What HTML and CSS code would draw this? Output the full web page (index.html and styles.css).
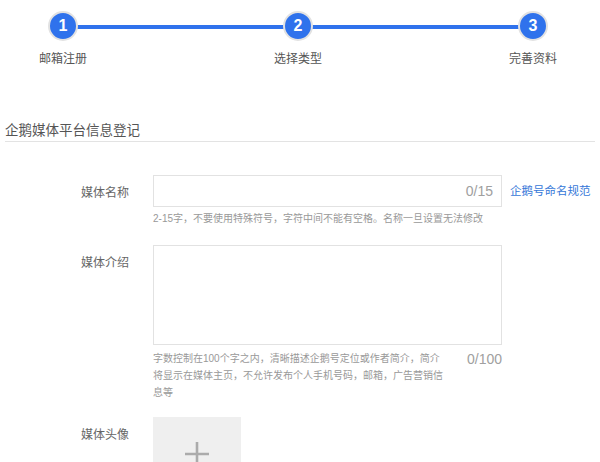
FILE: index.html
```html
<!DOCTYPE html>
<html lang="zh-CN">
<head>
<meta charset="utf-8">
<title>企鹅媒体平台信息登记</title>
<link rel="stylesheet" href="styles.css">
</head>
<body>
<div class="steps">
  <div class="step-dot"><span class="dot">1</span></div>
  <div class="connector"></div>
  <div class="step-dot"><span class="dot">2</span></div>
  <div class="connector"></div>
  <div class="step-dot"><span class="dot">3</span></div>
  <div class="step-label">邮箱注册</div>
  <div></div>
  <div class="step-label">选择类型</div>
  <div></div>
  <div class="step-label">完善资料</div>
</div>

<div class="section">
  <h2 class="section-title">企鹅媒体平台信息登记</h2>

  <div class="form">
    <div class="row row-name">
      <div class="label">媒体名称</div>
      <div class="field">
        <div class="field-line">
          <div class="input"><span class="count">0/15</span></div>
          <a class="link" href="#">企鹅号命名规范</a>
        </div>
        <div class="hint">2-15字，不要使用特殊符号，字符中间不能有空格。名称一旦设置无法修改</div>
      </div>
    </div>

    <div class="row row-intro">
      <div class="label">媒体介绍</div>
      <div class="field">
        <div class="textarea"></div>
        <div class="under">
          <div class="hint hint-multi">字数控制在100个字之内，清晰描述企鹅号定位或作者简介，简介将显示在媒体主页，不允许发布个人手机号码，邮箱，广告营销信息等</div>
          <span class="count count-big">0/100</span>
        </div>
      </div>
    </div>

    <div class="row row-avatar">
      <div class="label">媒体头像</div>
      <div class="field">
        <div class="avatar">
          <svg class="plus" width="24" height="24" viewBox="0 0 24 24"><path d="M12 0V24M0 12H24" stroke="#ababab" stroke-width="2.6" fill="none"/></svg>
        </div>
      </div>
    </div>
  </div>
</div>
</body>
</html>
```

FILE: styles.css
```css
* { box-sizing: border-box; }
html, body { margin: 0; padding: 0; background: #fff; }
body {
  font-family: "Liberation Sans", "Noto Sans CJK SC", sans-serif;
  color: #666;
  width: 600px;
  height: 462px;
  overflow: hidden;
}

.steps {
  display: grid;
  grid-template-columns: 80px 1fr 80px 1fr 80px;
  width: 550px;
  margin: 11px 0 0 23px;
}
.step-dot {
  display: flex;
  justify-content: center;
  position: relative;
  z-index: 1;
}
.dot {
  width: 30px;
  height: 30px;
  border-radius: 50%;
  border: 2px solid #e2e2e2;
  background: #2f72ec;
  color: #fff;
  font-size: 16px;
  font-weight: bold;
  line-height: 26px;
  text-align: center;
}
.connector {
  align-self: center;
  height: 4px;
  background: #2f72ec;
  margin: 1px -30px 0;
}
.step-label {
  text-align: center;
  font-size: 12px;
  line-height: 16px;
  margin-top: 10px;
  color: #555;
}

.section { margin: 54px 5px 0; }
.section-title {
  margin: 0;
  font-size: 13.5px;
  font-weight: normal;
  line-height: 19px;
  color: #555;
  padding-bottom: 1px;
  border-bottom: 1px solid #e3e3e3;
}

.form { padding-top: 33px; }
.row { display: flex; }
.label {
  width: 124px;
  text-align: right;
  margin-right: 24px;
  font-size: 12px;
  line-height: 20px;
  padding-top: 8px;
  color: #666;
}
.field-line { display: flex; align-items: center; }
.input {
  width: 349px;
  height: 32px;
  border: 1px solid #e2e2e2;
  display: flex;
  align-items: center;
  justify-content: flex-end;
  padding-right: 8px;
}
.count { font-size: 14px; color: #a0a0a0; line-height: 17px; }
.link {
  margin-left: 8px;
  font-size: 11.5px;
  color: #3577d8;
  text-decoration: none;
  line-height: 16px;
}
.hint {
  font-size: 10px;
  line-height: 16px;
  color: #999;
  margin-top: 4px;
}

.row-intro { margin-top: 18px; }
.textarea {
  width: 349px;
  height: 100px;
  border: 1px solid #e2e2e2;
}
.under {
  width: 349px;
  display: flex;
  justify-content: space-between;
  align-items: flex-start;
}
.hint-multi {
  width: 295px;
  line-height: 17px;
  margin-top: 5px;
}
.count-big { margin-top: 6px; color: #a0a0a0; }

.row-avatar { margin-top: 16px; }
.avatar {
  width: 88px;
  height: 88px;
  background: #efefef;
  display: flex;
  justify-content: center;
  align-items: flex-start;
  padding-top: 25px;
}
.plus { display: block; }
```
